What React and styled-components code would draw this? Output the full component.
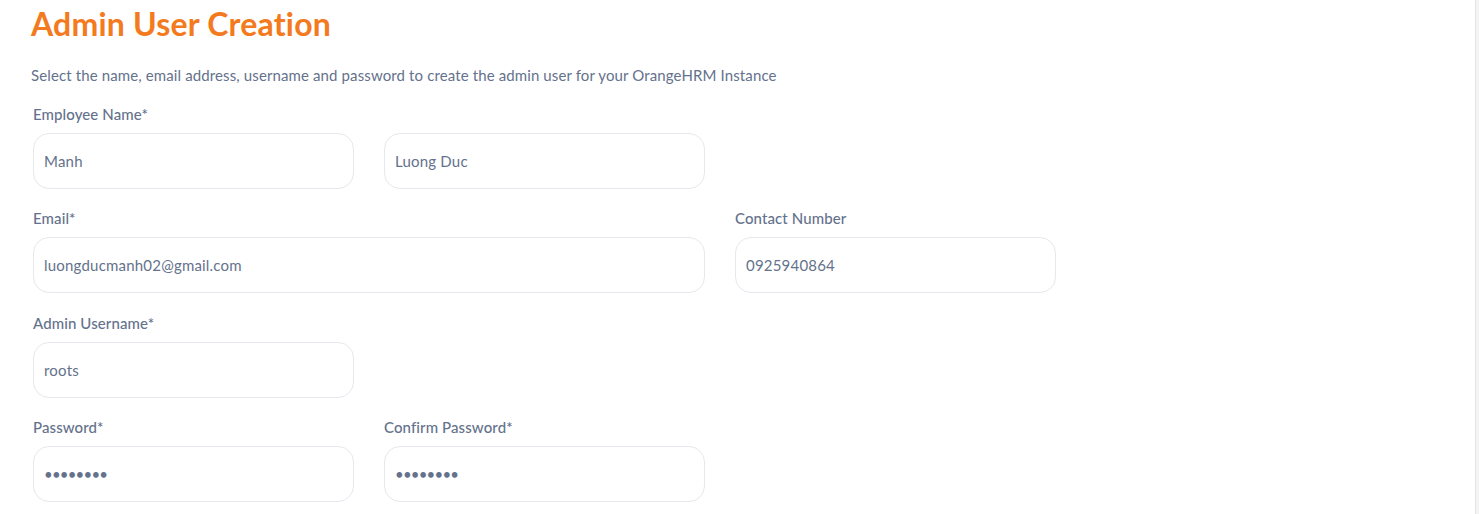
import React from 'react';
import styled, { createGlobalStyle } from 'styled-components';

const GlobalStyle = createGlobalStyle`
    * { box-sizing: border-box; }
    html, body {
        margin: 0;
        padding: 0;
        background: #ffffff;
        font-family: "Lato", "Noto Sans", sans-serif;
    }
`

const Page = styled.div`
    display: flex;
    height: 514px;
    overflow: hidden;
`

const Main = styled.main`
    flex: 1;
    padding: 4px 0 0 31px;
`

const Edge = styled.div`
    width: 4px;
    background-color: #f4f4f4;
    border-left: 1px solid #e4e4e4;
`

const Title = styled.h1`
    margin: 0;
    font-size: 32px;
    line-height: 40px;
    font-weight: 700;
    color: #f47a20;
    letter-spacing: 0.2px;
`

const Subtitle = styled.p`
    margin: 21px 0 0;
    font-size: 15px;
    line-height: 20px;
    color: #64728c;
    letter-spacing: 0.12px;
`

const Form = styled.form`
    display: grid;
    grid-template-columns: repeat(3, 321px);
    column-gap: 30px;
    row-gap: 19.4px;
    margin: 19px 0 0 2px;
`

const Field = styled.div`
    display: flex;
    flex-direction: column;
    grid-column: ${props => props.col || 'auto'} / span ${props => props.span || 1};

    label {
        font-size: 15px;
        line-height: 20px;
        font-weight: 500;
        color: #64728c;
        margin-bottom: 9px;
        min-height: 20px;
        letter-spacing: 0.1px;
    }
`

const Input = styled.input`
    height: 56px;
    width: 100%;
    border-radius: 16px;
    border: solid 1px #e6e8ee;
    background-color: #ffffff;
    padding: 0 10px;
    font-family: inherit;
    font-size: 15px;
    color: #64728c;
    letter-spacing: ${props => props.type === 'password' ? '-0.8px' : '0.2px'};

    :focus {
        outline: none;
    }
`

function App() {
    return (
        <>
            <GlobalStyle />
            <Page>
                <Main>
                    <Title>Admin User Creation</Title>
                    <Subtitle>Select the name, email address, username and password to create the admin user for your OrangeHRM Instance</Subtitle>
                    <Form onSubmit={e => e.preventDefault()}>
                        <Field col={1}>
                            <label>Employee Name*</label>
                            <Input type="text" defaultValue="Manh" />
                        </Field>
                        <Field col={2}>
                            <label></label>
                            <Input type="text" defaultValue="Luong Duc" />
                        </Field>

                        <Field col={1} span={2}>
                            <label>Email*</label>
                            <Input type="text" defaultValue="luongducmanh02@gmail.com" />
                        </Field>
                        <Field col={3}>
                            <label>Contact Number</label>
                            <Input type="text" defaultValue="0925940864" />
                        </Field>

                        <Field col={1}>
                            <label>Admin Username*</label>
                            <Input type="text" defaultValue="roots" />
                        </Field>

                        <Field col={1}>
                            <label>Password*</label>
                            <Input type="password" defaultValue="12345678" />
                        </Field>
                        <Field col={2}>
                            <label>Confirm Password*</label>
                            <Input type="password" defaultValue="12345678" />
                        </Field>
                    </Form>
                </Main>
                <Edge />
            </Page>
        </>
    )
}

export default App;
